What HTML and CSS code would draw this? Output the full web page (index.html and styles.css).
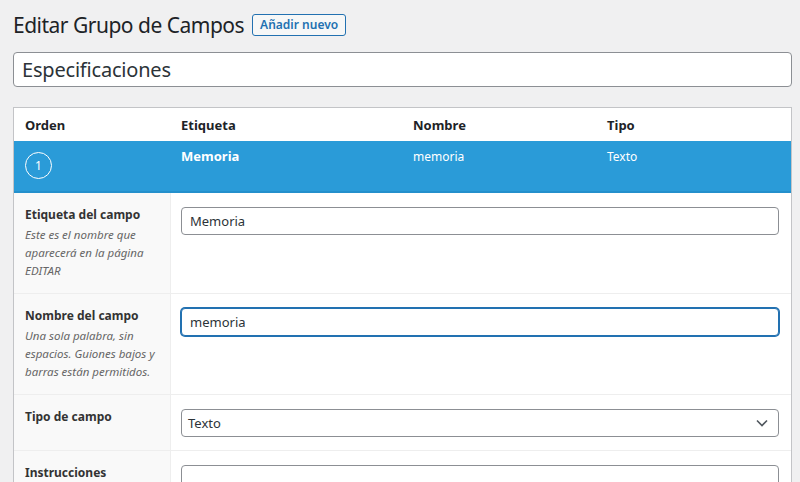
FILE: index.html
```html
<!DOCTYPE html>
<html lang="es">
<head>
  <meta charset="UTF-8">
  <title>Editar Grupo de Campos</title>
  <link rel="stylesheet" href="styles.css">
</head>
<body>
  <div class="page-head">
    <h1>Editar Grupo de Campos</h1>
    <a class="add-new" href="#">Añadir nuevo</a>
  </div>

  <input class="title-input" type="text" value="Especificaciones">

  <div class="fields-box">
    <div class="fields-head">
      <div>Orden</div>
      <div>Etiqueta</div>
      <div>Nombre</div>
      <div>Tipo</div>
    </div>

    <div class="field-row">
      <div><span class="order-circle">1</span></div>
      <div class="field-label">Memoria</div>
      <div>memoria</div>
      <div>Texto</div>
    </div>

    <div class="setting">
      <div class="setting-label">
        <strong>Etiqueta del campo</strong>
        <p>Este es el nombre que aparecerá en la página EDITAR</p>
      </div>
      <div class="setting-input">
        <input type="text" value="Memoria">
      </div>
    </div>

    <div class="setting">
      <div class="setting-label">
        <strong>Nombre del campo</strong>
        <p>Una sola palabra, sin espacios. Guiones bajos y barras están permitidos.</p>
      </div>
      <div class="setting-input">
        <input class="focused" type="text" value="memoria">
      </div>
    </div>

    <div class="setting">
      <div class="setting-label">
        <strong>Tipo de campo</strong>
      </div>
      <div class="setting-input">
        <div class="select">
          <span>Texto</span>
          <svg width="12" height="8" viewBox="0 0 12 8"><path d="M1 1.5l5 5 5-5" fill="none" stroke="#50575e" stroke-width="1.6"/></svg>
        </div>
      </div>
    </div>

    <div class="setting">
      <div class="setting-label">
        <strong>Instrucciones</strong>
      </div>
      <div class="setting-input">
        <input type="text" value="">
      </div>
    </div>
  </div>
</body>
</html>
```

FILE: styles.css
```css
html, body {
  overflow: hidden;
}
body {
  margin: 0;
  padding: 11px 8px 0 13px;
  background-color: #f0f0f1;
  font-family: "Noto Sans", "Open Sans", sans-serif;
  color: #1d2327;
}
.page-head {
  display: flex;
  align-items: center;
  gap: 8px;
}
.page-head h1 {
  margin: 0;
  font-size: 21px;
  font-weight: 400;
  line-height: 28px;
  letter-spacing: -0.5px;
}
.add-new {
  display: inline-block;
  height: 20px;
  line-height: 20px;
  padding: 0 7px;
  border: 1px solid #2271b1;
  border-radius: 3px;
  background: #f6f7f7;
  color: #2271b1;
  font-size: 12px;
  font-weight: 600;
  text-decoration: none;
}
.title-input {
  display: block;
  box-sizing: border-box;
  width: 100%;
  height: 35px;
  margin-top: 13px;
  padding: 0 8px;
  border: 1px solid #8c8f94;
  border-radius: 4px;
  background: #fff;
  font-family: inherit;
  font-size: 20px;
  letter-spacing: -0.2px;
  color: #2c3338;
}
.fields-box {
  margin-top: 20px;
  border: 1px solid #c3c4c7;
  background: #fff;
}
.fields-head, .field-row {
  display: grid;
  grid-template-columns: 167px 232px 194px 1fr;
}
.fields-head {
  height: 33px;
  align-items: center;
  font-size: 13px;
  font-weight: 700;
  color: #1d2327;
}
.fields-head div:first-child, .field-row div:first-child {
  padding-left: 11px;
}
.field-row {
  height: 49px;
  padding-top: 1px;
  background: #2a9bd8;
  border-bottom: 2px solid #2490cc;
  color: #fff;
  font-size: 12px;
  line-height: 18px;
}
.field-row > div {
  padding-top: 6px;
}
.field-row .field-label {
  font-size: 13px;
  font-weight: 700;
  padding-top: 5px;
}
.field-row div:first-child {
  padding-top: 10px;
}
.order-circle {
  display: flex;
  align-items: center;
  justify-content: center;
  box-sizing: border-box;
  width: 27px;
  height: 27px;
  border: 1px solid #fff;
  border-radius: 50%;
  font-size: 12px;
}
.setting {
  display: flex;
  border-top: 1px solid #eeeeee;
}
.fields-box .setting:nth-child(3) {
  border-top: none;
}
.setting-label {
  box-sizing: border-box;
  width: 157px;
  flex-shrink: 0;
  padding: 13px 8px 13px 11px;
  background: #f9f9f9;
  border-right: 1px solid #eeeeee;
}
.setting-label strong {
  display: block;
  font-size: 12px;
  line-height: 18px;
  font-weight: 700;
  color: #333;
}
.setting-label p {
  margin: 2px 0 0;
  font-size: 11.5px;
  line-height: 18px;
  font-style: italic;
  color: #666;
}
.setting-input {
  flex-grow: 1;
  padding: 14px 12px 13px 10px;
}
.setting-input input, .select {
  display: block;
  box-sizing: border-box;
  width: 100%;
  height: 28px;
  padding: 0 8px;
  border: 1px solid #8c8f94;
  border-radius: 4px;
  background: #fff;
  font-family: inherit;
  font-size: 13px;
  color: #2c3338;
}
.setting-input input.focused {
  border-color: #2271b1;
  box-shadow: 0 0 0 1px #2271b1;
  outline: none;
}
.select {
  display: flex;
  align-items: center;
  justify-content: space-between;
  padding: 0 10px 0 6px;
}
```
